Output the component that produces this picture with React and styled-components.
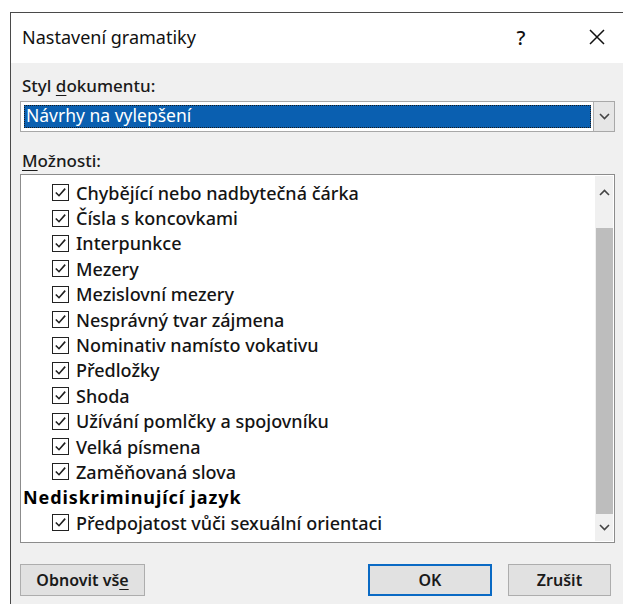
import React from 'react'
import styled, { createGlobalStyle } from 'styled-components'

const Global = createGlobalStyle`
  html, body {
    margin: 0;
    padding: 0;
    background: #ffffff;
    overflow: hidden;
  }
  body {
    font-family: "Noto Sans", "Open Sans", sans-serif;
    color: #1a1a1a;
  }
`

const Page = styled.div`
  padding: 12px 0 0 10px;
  height: 604px;
  box-sizing: border-box;
`

const Dialog = styled.div`
  width: 640px;
  height: 620px;
  border-top: 1px solid #4a4a4a;
  border-left: 1px solid #4a4a4a;
  background: #f0f0f0;
  display: flex;
  flex-direction: column;
`

const TitleBar = styled.div`
  height: 50px;
  background: #ffffff;
  display: flex;
  align-items: center;
  padding: 0 5px 2px 11px;
  box-sizing: border-box;
  width: 613px;
`

const Title = styled.div`
  flex: 1;
  font-size: 18px;
  color: #111;
`

const TitleButton = styled.div`
  width: 44px;
  margin-right: ${p => p.mr || 0}px;
  display: flex;
  justify-content: center;
  align-items: center;
  font-size: 20px;
  font-weight: 500;
  color: #111;
`

const Body = styled.div`
  padding: 10px 0 0 9px;
  width: 595px;
  display: flex;
  flex-direction: column;
`

const Label = styled.div`
  font-size: 17px;
  font-weight: 500;
  padding-left: 2px;
  height: 26px;
  line-height: 26px;
  margin-bottom: ${p => p.mb || 0}px;
  u { text-decoration-thickness: 1px; text-underline-offset: 3px; }
`

const Combo = styled.div`
  height: 31px;
  border: 1px solid #a8a8a8;
  background: #ffffff;
  display: flex;
  box-sizing: border-box;
  margin-bottom: 16px;
`

const ComboValue = styled.div`
  flex: 1;
  margin: 3px 2px 3px 3px;
  background: #0a5fb0;
  color: #ffffff;
  font-size: 17.5px;
  line-height: 21px;
  padding-left: 2px;
  outline: 1px dotted #1b1b1b;
  outline-offset: -1px;
`

const ComboArrow = styled.div`
  width: 20px;
  border-left: 1px solid #b0b0b0;
  background: #e6e6e6;
  display: flex;
  align-items: center;
  justify-content: center;
`

const ListBox = styled.div`
  height: 369px;
  border: 1px solid #8c8c8c;
  background: #ffffff;
  box-sizing: border-box;
  display: flex;
`

const Items = styled.div`
  flex: 1;
  padding-top: 5px;
`

const Item = styled.div`
  height: 25.4px;
  display: flex;
  align-items: center;
  padding-left: ${p => (p.group ? 2 : 31)}px;
  font-size: 18px;
  letter-spacing: ${p => (p.group ? 0.9 : 0)}px;
  font-weight: ${p => (p.group ? 700 : 500)};
  color: ${p => (p.group ? '#000' : '#141414')};
  white-space: nowrap;
`

const Box = styled.span`
  width: 15px;
  height: 15px;
  border: 1px solid #222;
  margin-right: 7px;
  display: inline-flex;
  align-items: center;
  justify-content: center;
  flex: none;
`

const Scrollbar = styled.div`
  width: 18px;
  background: #f0f0f0;
  display: flex;
  flex-direction: column;
  margin: 1px 1px 1px 0;
`

const ScrollArrow = styled.div`
  height: ${p => p.h}px;
  display: flex;
  align-items: center;
  justify-content: center;
  flex: none;
`

const Track = styled.div`
  height: ${p => p.h}px;
  flex: none;
`

const Thumb = styled.div`
  flex: 1;
  background: #bdbdbd;
  margin: 0 0 0 1px;
`

const Footer = styled.div`
  display: flex;
  align-items: center;
  margin-top: 21px;
`

const Button = styled.div`
  width: ${p => p.w}px;
  height: 32px;
  box-sizing: border-box;
  border: ${p => (p.primary ? '2px solid #0a6ac4' : '1px solid #adadad')};
  background: #e1e1e1;
  display: flex;
  align-items: center;
  justify-content: center;
  font-size: 16px;
  font-weight: 600;
  margin-left: ${p => p.ml || 0}px;
  u { text-underline-offset: 3px; }
`

const Check = () => (
  <svg width="13" height="13" viewBox="0 0 13 13">
    <path d="M1.8 6.5 L5 9.7 L11.2 2.6" fill="none" stroke="#1e1e1e" strokeWidth="1.6" />
  </svg>
)

const Chevron = ({ up }) => (
  <svg width="11" height="7" viewBox="0 0 11 7">
    <path
      d={up ? 'M1 6 L5.5 1.5 L10 6' : 'M1 1 L5.5 5.5 L10 1'}
      fill="none"
      stroke="#444"
      strokeWidth="1.6"
    />
  </svg>
)

const options = [
  'Chybějící nebo nadbytečná čárka',
  'Čísla s koncovkami',
  'Interpunkce',
  'Mezery',
  'Mezislovní mezery',
  'Nesprávný tvar zájmena',
  'Nominativ namísto vokativu',
  'Předložky',
  'Shoda',
  'Užívání pomlčky a spojovníku',
  'Velká písmena',
  'Zaměňovaná slova',
]

export default function App() {
  return (
    <Page>
      <Global />
      <Dialog>
        <TitleBar>
          <Title>Nastavení gramatiky</Title>
          <TitleButton mr={32}>?</TitleButton>
          <TitleButton>
            <svg width="16" height="16" viewBox="0 0 16 16">
              <path d="M1 1 L15 15 M15 1 L1 15" stroke="#111" strokeWidth="1.5" />
            </svg>
          </TitleButton>
        </TitleBar>
        <Body>
          <Label mb={2}>
            Styl <u>d</u>okumentu:
          </Label>
          <Combo>
            <ComboValue>Návrhy na vylepšení</ComboValue>
            <ComboArrow>
              <Chevron />
            </ComboArrow>
          </Combo>
          <Label mb={0}>
            <u>M</u>ožnosti:
          </Label>
          <ListBox>
            <Items>
              {options.map(o => (
                <Item key={o}>
                  <Box>
                    <Check />
                  </Box>
                  {o}
                </Item>
              ))}
              <Item group>Nediskriminující jazyk</Item>
              <Item>
                <Box>
                  <Check />
                </Box>
                Předpojatost vůči sexuální orientaci
              </Item>
            </Items>
            <Scrollbar>
              <ScrollArrow h={33}>
                <Chevron up />
              </ScrollArrow>
              <Track h={19} />
              <Thumb />
              <ScrollArrow h={27}>
                <Chevron />
              </ScrollArrow>
            </Scrollbar>
          </ListBox>
          <Footer>
            <Button w={125}>
              Obnovit vš<u>e</u>
            </Button>
            <Button w={124} ml={223} primary>
              OK
            </Button>
            <Button w={103} ml={16}>
              Zrušit
            </Button>
          </Footer>
        </Body>
      </Dialog>
    </Page>
  )
}
